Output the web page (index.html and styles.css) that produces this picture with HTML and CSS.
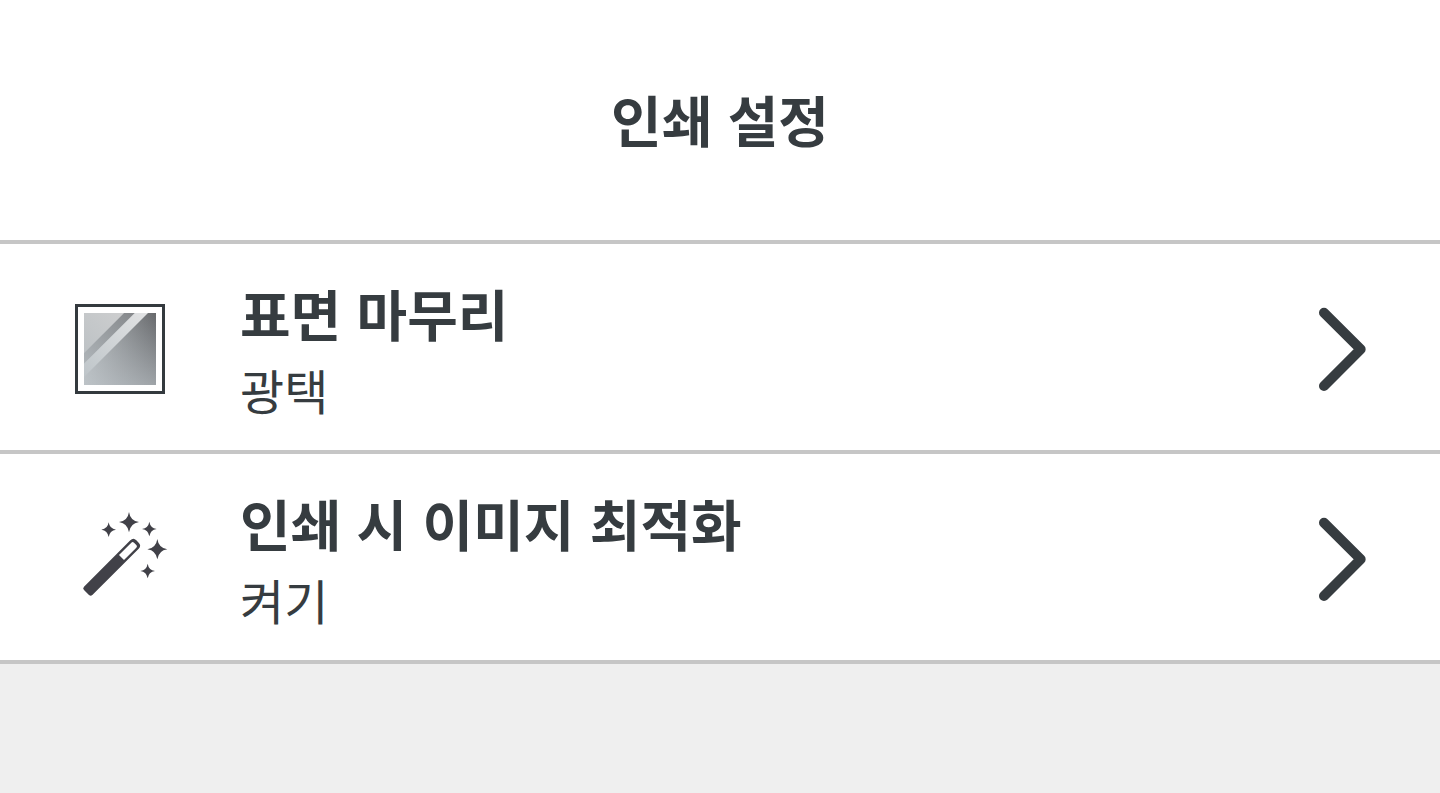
FILE: index.html
```html
<!DOCTYPE html>
<html lang="ko">
<head>
  <meta charset="UTF-8" />
  <meta name="viewport" content="width=device-width, initial-scale=1" />
  <title>인쇄 설정</title>
  <link rel="stylesheet" href="styles.css">
</head>
<body>

  <header class="title-bar">
    <h1>인쇄 설정</h1>
  </header>

  <main class="settings">
    <!-- Surface finish -->
    <button type="button" class="setting">
      <svg class="icon" viewBox="21 12 288 288" aria-hidden="true">
        <defs>
          <linearGradient id="gloss" x1="0" y1="0" x2="1" y2="0">
            <stop offset="0" stop-color="#b4b9bc" />
            <stop offset="1" stop-color="#67696c" />
          </linearGradient>
          <linearGradient id="haze" x1="0" y1="1" x2="0" y2="0">
            <stop offset="0" stop-color="#c3cacf" stop-opacity="0.600" />
            <stop offset="1" stop-color="#c3cacf" stop-opacity="0" />
          </linearGradient>
          <linearGradient id="shine" x1="0" y1="1" x2="1" y2="0">
            <stop offset="0" stop-color="#bec5c9" />
            <stop offset="1" stop-color="#e2e3e4" />
          </linearGradient>
          <linearGradient id="shade" x1="0" y1="1" x2="1" y2="0">
            <stop offset="0" stop-color="#afb5b9" />
            <stop offset="1" stop-color="#85888b" />
          </linearGradient>
          <linearGradient id="corner" x1="0" y1="1" x2="1" y2="0">
            <stop offset="0" stop-color="#bdc2c5" />
            <stop offset="1" stop-color="#cdcecf" />
          </linearGradient>
        </defs>
        <rect x="34.500" y="31.500" width="261" height="261" fill="#fff" stroke="#343a3e" stroke-width="9" />
        <rect x="57" y="54" width="216" height="216" fill="url(#gloss)" />
        <rect x="57" y="54" width="216" height="216" fill="url(#haze)" />
        <path d="M57 54H178L57 175Z" fill="url(#corner)" />
        <path d="M178 54H209L57 206V175Z" fill="url(#shade)" />
        <path d="M209 54H249L57 246V206Z" fill="url(#shine)" />
      </svg>
      <span class="text">
        <span class="name">표면 마무리</span>
        <span class="value">광택</span>
      </span>
      <svg class="arrow" viewBox="54 12 144 288" aria-hidden="true">
        <path d="M72 53L182 163L72 273" />
      </svg>
    </button>

    <!-- Image optimization -->
    <button type="button" class="setting">
      <svg class="icon" viewBox="6 27 288 288" aria-hidden="true">
        <g fill="#414148">
          <path fill-rule="evenodd" d="M42 260L181 121Q190 112 199 121L206 128Q215 137 206 146L67 285Q62 290 57 285L42 270Q37 265 42 260ZM147 165L162 180L199 143Q203 139 199 135L192 128Q188 124 184 128Z" />
          <path d="M177 36Q181 63 207 66Q181 70 177 97Q173 70 147 66Q173 63 177 36Z" />
          <path d="M262 117Q266 144 292 148Q266 152 262 178Q258 152 232 148Q258 144 262 117Z" />
          <path d="M116 67Q119 87 138 89Q119 92 116 111Q113 92 94 89Q113 87 116 67Z" />
          <path d="M238 65Q241 84 260 87Q241 90 238 109Q235 90 216 87Q235 84 238 65Z" />
          <path d="M233 191Q236 210 255 213Q236 216 233 235Q230 216 211 213Q230 210 233 191Z" />
        </g>
      </svg>
      <span class="text">
        <span class="name">인쇄 시 이미지 최적화</span>
        <span class="value">켜기</span>
      </span>
      <svg class="arrow" viewBox="54 12 144 288" aria-hidden="true">
        <path d="M72 53L182 163L72 273" />
      </svg>
    </button>
  </main>

</body>
</html>
```
FILE: styles.css
```css
* {
  box-sizing: border-box;
}

body {
  margin: 0;
  background-color: #efefef;
  color: #363c40;
  font-family: "Noto Sans CJK KR", sans-serif;
}

.title-bar {
  padding: 81px 72px 85px;
  background-color: #fff;
  border-bottom: 4px solid #c6c6c6;
  text-align: center;
}

h1,
.name {
  margin: 0;
  font-size: 55px;
  line-height: 74px;
  font-weight: 700;
}

/* Setting rows */
.setting {
  display: flex;
  align-items: center;
  gap: 72px;
  width: 100%;
  padding: 29px 74px 29px 72px;
  border: none;
  border-bottom: 4px solid #c6c6c6;
  background-color: #fff;
  color: inherit;
  font-family: inherit;
  text-align: left;
  cursor: pointer;
}

.icon {
  flex: none;
  width: 96px;
  height: 96px;
}

.text {
  flex: 1;
  display: flex;
  flex-direction: column;
  gap: 8px;
  padding-top: 2px;
}

.value {
  font-size: 48px;
  line-height: 64px;
}

/* Right arrow */
.arrow {
  flex: none;
  width: 48px;
  height: 96px;
}

.arrow path {
  fill: none;
  stroke: #363c40;
  stroke-width: 30;
  stroke-linecap: round;
  stroke-linejoin: round;
}
```
